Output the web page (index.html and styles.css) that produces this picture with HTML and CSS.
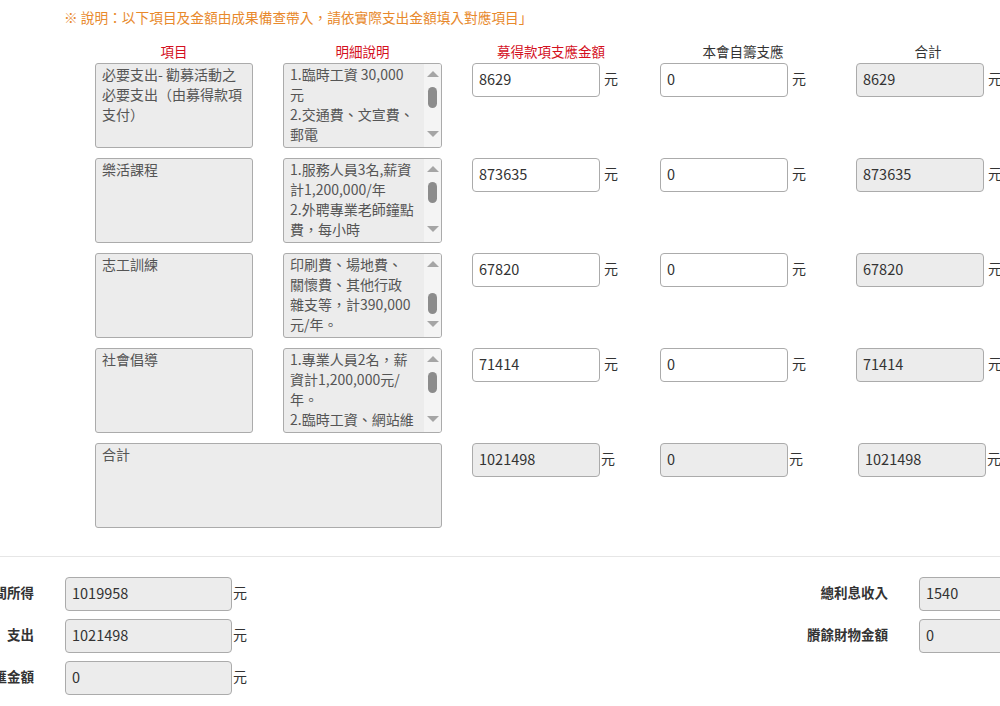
FILE: index.html
```html
<!DOCTYPE html>
<html lang="zh-Hant">
<head>
<meta charset="utf-8">
<title>支出明細</title>
<link rel="stylesheet" href="styles.css">
</head>
<body>
<p class="note">※ 說明：以下項目及金額由成果備查帶入，請依實際支出金額填入對應項目」</p>

<div class="grid head">
  <div class="th red">項目</div>
  <div class="th red">明細說明</div>
  <div class="th red">募得款項支應金額</div>
  <div class="th">本會自籌支應</div>
  <div class="th">合計</div>
</div>

<div class="rows">
  <div class="grid row">
    <div class="box item">必要支出- 勸募活動之<br>必要支出（由募得款項<br>支付）</div>
    <div class="box memo">
      <div class="memo-text">1.臨時工資 30,000<br>元<br>2.交通費、文宣費、<br>郵電</div>
      <div class="sb"><span class="arr up"></span><div class="track"><span class="thumb"></span></div><span class="arr down"></span></div>
    </div>
    <div class="cell"><input class="field" value="8629"><span class="yuan">元</span></div>
    <div class="cell"><input class="field" value="0"><span class="yuan">元</span></div>
    <div class="cell"><input class="field ro" value="8629" readonly><span class="yuan">元</span></div>
  </div>

  <div class="grid row">
    <div class="box item">樂活課程</div>
    <div class="box memo">
      <div class="memo-text">1.服務人員3名,薪資<br>計1,200,000/年<br>2.外聘專業老師鐘點<br>費，每小時</div>
      <div class="sb"><span class="arr up"></span><div class="track"><span class="thumb"></span></div><span class="arr down"></span></div>
    </div>
    <div class="cell"><input class="field" value="873635"><span class="yuan">元</span></div>
    <div class="cell"><input class="field" value="0"><span class="yuan">元</span></div>
    <div class="cell"><input class="field ro" value="873635" readonly><span class="yuan">元</span></div>
  </div>

  <div class="grid row">
    <div class="box item">志工訓練</div>
    <div class="box memo">
      <div class="memo-text">印刷費、場地費、<br>關懷費、其他行政<br>雜支等，計390,000<br>元/年。</div>
      <div class="sb"><span class="arr up"></span><div class="track"><span class="thumb low"></span></div><span class="arr down"></span></div>
    </div>
    <div class="cell"><input class="field" value="67820"><span class="yuan">元</span></div>
    <div class="cell"><input class="field" value="0"><span class="yuan">元</span></div>
    <div class="cell"><input class="field ro" value="67820" readonly><span class="yuan">元</span></div>
  </div>

  <div class="grid row">
    <div class="box item">社會倡導</div>
    <div class="box memo">
      <div class="memo-text">1.專業人員2名，薪<br>資計1,200,000元/<br>年。<br>2.臨時工資、網站維</div>
      <div class="sb"><span class="arr up"></span><div class="track"><span class="thumb"></span></div><span class="arr down"></span></div>
    </div>
    <div class="cell"><input class="field" value="71414"><span class="yuan">元</span></div>
    <div class="cell"><input class="field" value="0"><span class="yuan">元</span></div>
    <div class="cell"><input class="field ro" value="71414" readonly><span class="yuan">元</span></div>
  </div>

  <div class="grid row total">
    <div class="box item wide">合計</div>
    <div class="cell tight"><input class="field ro" value="1021498" readonly><span class="yuan">元</span></div>
    <div class="cell tight"><input class="field ro" value="0" readonly><span class="yuan">元</span></div>
    <div class="cell tight shift"><input class="field ro" value="1021498" readonly><span class="yuan">元</span></div>
  </div>
</div>

<div class="summary">
  <div class="sum-col">
    <div class="sum-row"><label class="lbl">期間所得</label><input class="field ro sfield" value="1019958" readonly><span class="yuan">元</span></div>
    <div class="sum-row"><label class="lbl">支出</label><input class="field ro sfield" value="1021498" readonly><span class="yuan">元</span></div>
    <div class="sum-row"><label class="lbl">結匯金額</label><input class="field ro sfield" value="0" readonly><span class="yuan">元</span></div>
  </div>
  <div class="sum-col">
    <div class="sum-row"><label class="lbl">總利息收入</label><input class="field ro sfield" value="1540" readonly><span class="yuan">元</span></div>
    <div class="sum-row"><label class="lbl">賸餘財物金額</label><input class="field ro sfield" value="0" readonly><span class="yuan">元</span></div>
  </div>
</div>
</body>
</html>
```

FILE: styles.css
```css
html, body {
  margin: 0;
  padding: 0;
}
body {
  width: 1000px;
  height: 706px;
  overflow: hidden;
  background: #fff;
  color: #333;
  font-family: "Noto Sans CJK TC", "Noto Sans", sans-serif;
  font-size: 14px;
  line-height: 20px;
}
.note {
  margin: 0;
  padding: 7px 0 0 64px;
  color: #e8892c;
  font-size: 13.7px;
  line-height: 20px;
}
.grid {
  display: grid;
  grid-template-columns: 158px 159px 158px 166px 144px;
  column-gap: 30px;
  padding-left: 95px;
}
.head {
  margin-top: 15px;
  height: 21px;
}
.th {
  text-align: center;
  font-size: 13.5px;
  line-height: 19px;
  color: #333;
}
.th.red {
  color: #d4101e;
}
.rows {
  display: flex;
  flex-direction: column;
  gap: 10px;
}
.row {
  height: 85px;
}
.box {
  box-sizing: border-box;
  height: 85px;
  border: 1px solid #ababab;
  border-radius: 3px;
  background: #ececec;
  color: #555;
  white-space: nowrap;
  overflow: hidden;
}
.item {
  padding: 0 6px;
}
.wide {
  grid-column: 1 / 3;
}
.memo {
  display: flex;
}
.memo-text {
  flex: 1;
  padding: 0 6px;
  overflow: hidden;
}
.sb {
  width: 17px;
  flex: none;
  background: #f4f4f4;
  display: flex;
  flex-direction: column;
  align-items: center;
  padding-bottom: 4px;
}
.arr {
  width: 0;
  height: 0;
  border-left: 6px solid transparent;
  border-right: 6px solid transparent;
}
.arr.up {
  margin-top: 7px;
  border-bottom: 6px solid #a5a5a5;
}
.arr.down {
  margin-bottom: 6px;
  border-top: 6px solid #a5a5a5;
}
.track {
  flex: 1;
  display: flex;
  flex-direction: column;
  align-items: center;
}
.thumb {
  display: block;
  width: 9px;
  height: 21px;
  margin-top: 10px;
  border-radius: 5px;
  background: #8c8c8c;
}
.thumb.low {
  margin-top: 26px;
}
.cell {
  display: flex;
  align-items: center;
  height: 34px;
}
.field {
  box-sizing: border-box;
  width: 128px;
  height: 34px;
  margin: 0;
  padding: 0 6px 4px;
  border: 1px solid #ababab;
  border-radius: 4px;
  background: #fff;
  color: #333;
  font-family: "Noto Sans CJK TC", "Noto Sans", sans-serif;
  font-size: 14.5px;
  outline: none;
}
.field.ro {
  background: #ececec;
}
.yuan {
  margin-left: 4px;
  margin-bottom: 5px;
  color: #333;
}
.tight .yuan {
  margin-left: 1px;
}
.shift {
  padding-left: 2px;
}
.summary {
  display: flex;
  width: 1708px;
  margin-left: -96px;
  margin-top: 28px;
  padding-top: 20px;
  border-top: 1px solid #e6e6e6;
}
.sum-col {
  width: 854px;
  display: flex;
  flex-direction: column;
  gap: 8px;
}
.sum-row {
  display: flex;
  align-items: center;
  height: 34px;
}
.lbl {
  width: 130px;
  margin-right: 31px;
  margin-bottom: 4px;
  text-align: right;
  font-weight: bold;
  font-size: 13.5px;
  color: #333;
}
.sfield {
  width: 167px;
}
.sum-row .yuan {
  margin-left: 1px;
}
```
